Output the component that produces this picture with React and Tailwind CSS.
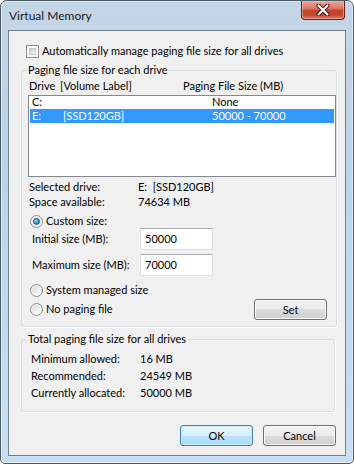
import React from "react";

const font = { fontFamily: 'Lato, "Noto Sans", sans-serif' };

function Radio({ checked }) {
  return (
    <div className="w-[13px] h-[13px] rounded-full border border-[#8c8e92] bg-[linear-gradient(135deg,#d4d4d4,#f7f7f7_70%,#ffffff)] flex items-center justify-center shrink-0 shadow-[inset_0_0_0_1px_#f4f4f4]">
      {checked && (
        <div className="w-[7px] h-[7px] rounded-full bg-[radial-gradient(circle_at_35%_35%,#a8e4ff,#2b8de0_55%,#0b4c98)] border border-[#1a4f8a]" />
      )}
    </div>
  );
}

function Checkbox() {
  return (
    <div className="w-[13px] h-[13px] border border-[#8e8f8f] bg-white p-[2px] shrink-0">
      <div className="w-full h-full bg-[linear-gradient(135deg,#cbcfd5,#f6f6f6)] border border-[#c2c6cc]" />
    </div>
  );
}

function Button({ children, def }) {
  return (
    <div
      className={
        "w-[73px] h-[21px] rounded-[3px] border flex items-center justify-center leading-none " +
        (def
          ? "border-[#3c7fb1] bg-[linear-gradient(180deg,#eaf6fd_0%,#d9f0fc_50%,#bee6fd_50%,#a7d9f5_100%)] shadow-[inset_0_0_0_1px_#c7ecfd]"
          : "border-[#707070] bg-[linear-gradient(180deg,#f2f2f2_0%,#ebebeb_50%,#dddddd_50%,#cfcfcf_100%)] shadow-[inset_0_0_0_1px_#fcfcfc]")
      }
    >
      {children}
    </div>
  );
}

function TextBox({ value }) {
  return (
    <div className="w-[73px] h-[22px] bg-white border border-[#dbdfe6] border-t-[#abadb3] flex items-center pl-[4px]">
      {value}
    </div>
  );
}

export default function App() {
  return (
    <div style={font} className="w-[354px] h-[464px] text-black text-[11px] whitespace-nowrap">
      <div className="w-full h-full flex flex-col rounded-t-[7px] rounded-b-[5px] border border-[#4c5a68] bg-[linear-gradient(180deg,#c4d5e6_0%,#bdd3ea_35%,#c2d9f0_70%,#c9def3_100%)] shadow-[inset_0_0_0_1px_rgba(255,255,255,0.55)] px-[7px] pb-[7px]">
        {/* Title bar */}
        <div className="h-[29px] flex items-start justify-between shrink-0">
          <div className="self-center pl-[1px] pt-[1px] text-[12px] text-[#1b1b1b]">Virtual Memory</div>
          <div className="mr-[1px] w-[44px] h-[19px] rounded-b-[4px] border border-t-0 border-[#6b1e12] bg-[linear-gradient(180deg,#e9a698_0%,#dc7a66_40%,#c2412a_55%,#c74a33_80%,#e0866f_100%)] shadow-[inset_0_0_0_1px_rgba(255,200,190,0.5)] flex items-center justify-center">
            <svg width="14" height="12" viewBox="0 0 14 12">
              <path d="M2.5 1.5 L11.5 10.5 M11.5 1.5 L2.5 10.5" stroke="#4a1208" strokeWidth="4.2" strokeLinecap="round" fill="none" />
              <path d="M2.5 1.5 L11.5 10.5 M11.5 1.5 L2.5 10.5" stroke="#ffffff" strokeWidth="2.2" strokeLinecap="round" fill="none" />
            </svg>
          </div>
        </div>

        {/* Client area */}
        <div className="flex-1 border border-[#6f8090] bg-[#f0f0f0] flex flex-col pl-[12px] pr-[10px] pt-[12px]">
          <div className="h-[16px] flex items-center gap-[3px] ml-[5px]">
            <Checkbox />
            <span>Automatically manage paging file size for all drives</span>
          </div>

          {/* Group 1 */}
          <fieldset className="mt-[3px] border border-[#d5dfe5] rounded-[3px] shadow-[1px_1px_0_#ffffff] pb-[6px]">
            <legend className="ml-[5px] px-[1px] leading-[16px]">Paging file size for each drive</legend>
            <div className="h-[16px] flex items-center pl-[7px]">
              <span className="w-[31px]">Drive</span>
              <span className="w-[123px]">[Volume Label]</span>
              <span>Paging File Size (MB)</span>
            </div>
            <div className="mt-[1px] ml-[6px] w-[308px] h-[82px] bg-white border border-[#828790] pt-0">
              <div className="h-[13px] mx-[1px] flex items-center pl-[2px]">
                <span className="w-[31px]">C:</span>
                <span className="w-[149px]"></span>
                <span>None</span>
              </div>
              <div className="h-[14px] mx-[1px] flex items-center pl-[2px] bg-[#3399ff] text-white">
                <span className="w-[31px]">E:</span>
                <span className="w-[149px]">[SSD120GB]</span>
                <span>50000 - 70000</span>
              </div>
            </div>
            <div className="mt-[3px] pl-[7px]">
              <div className="h-[15px] flex items-center">
                <span className="w-[109px]">Selected drive:</span>
                <span>E:&nbsp;&nbsp;[SSD120GB]</span>
              </div>
              <div className="h-[15px] flex items-center">
                <span className="w-[109px]">Space available:</span>
                <span>74634 MB</span>
              </div>
            </div>
            <div className="mt-[5px] h-[13px] flex items-center gap-[3px] pl-[8px]">
              <Radio checked />
              <span>Custom size:</span>
            </div>
            <div className="h-[22px] flex items-center pl-[10px]">
              <span className="w-[108px]">Initial size (MB):</span>
              <TextBox value="50000" />
            </div>
            <div className="mt-[4px] h-[22px] flex items-center pl-[10px]">
              <span className="w-[108px]">Maximum size (MB):</span>
              <TextBox value="70000" />
            </div>
            <div className="flex items-start justify-between pl-[8px] pr-[9px]">
              <div className="mt-[7px] flex flex-col gap-[5px]">
                <div className="h-[14px] flex items-center gap-[3px]">
                  <Radio />
                  <span>System managed size</span>
                </div>
                <div className="h-[14px] flex items-center gap-[3px]">
                  <Radio />
                  <span>No paging file</span>
                </div>
              </div>
              <div className="mt-[23px]">
                <Button>Set</Button>
              </div>
            </div>
          </fieldset>

          {/* Group 2 */}
          <fieldset className="mt-[4px] border border-[#d5dfe5] rounded-[3px] shadow-[1px_1px_0_#ffffff] pt-[4px] pb-[9px]">
            <legend className="ml-[5px] px-[1px] leading-[16px]">Total paging file size for all drives</legend>
            <div className="pl-[9px]">
              <div className="h-[17px] flex items-center">
                <span className="w-[109px]">Minimum allowed:</span>
                <span>16 MB</span>
              </div>
              <div className="h-[17px] flex items-center">
                <span className="w-[109px]">Recommended:</span>
                <span>24549 MB</span>
              </div>
              <div className="h-[17px] flex items-center">
                <span className="w-[109px]">Currently allocated:</span>
                <span>50000 MB</span>
              </div>
            </div>
          </fieldset>

          <div className="mt-[13px] flex justify-end gap-[10px] mr-[-1px]">
            <Button def>OK</Button>
            <Button>Cancel</Button>
          </div>
        </div>
      </div>
    </div>
  );
}
